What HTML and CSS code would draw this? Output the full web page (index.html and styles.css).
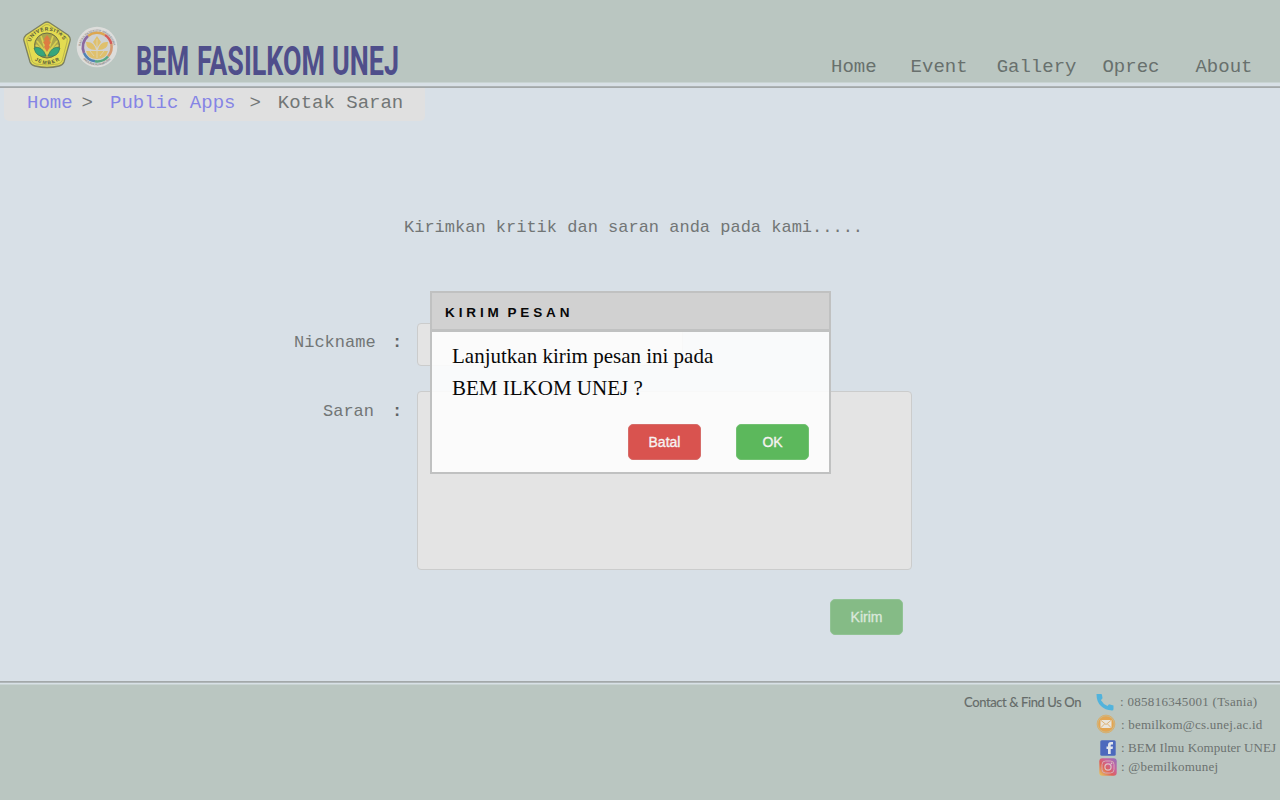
FILE: index.html
```html
<!DOCTYPE html>
<html lang="id">
<head>
<meta charset="utf-8">
<title>BEM FASILKOM UNEJ - Kotak Saran</title>
<link rel="stylesheet" href="styles.css">
</head>
<body>
<div class="page">
  <header class="header">
    <svg class="logo-unej" width="50" height="48" viewBox="0 0 50 48">
      <path d="M22 2Q25 0 28 2L46 14Q49 17 48 20L42 41Q41 44 37 45Q25 48 13 45Q9 44 8 41L2 20Q1 17 4 14Z" fill="#e3dc51" stroke="#7d8062" stroke-width="1.3"/>
      <path d="M23 4Q25 3 27 4L44 16Q46 18 45 21L40 40Q39 42 36 43Q25 45 14 43Q11 42 10 40L5 21Q4 18 6 16Z" fill="none" stroke="#a7a44e" stroke-width=".7"/>
      <circle cx="25" cy="24.500" r="12.500" fill="#aaa64c" stroke="#6d6f45"/>
      <path d="M15 20L25 33L35 20M14 24L25 33L36 24M19 15L25 33L31 15" fill="none" stroke="#d8cf52" stroke-width="1.800"/>
      <path d="M12 27Q20 24 24 35Q14 37 12 27ZM38 27Q30 24 26 35Q36 37 38 27Z" fill="#36a67c" stroke="#3b765b" stroke-width=".7"/>
      <path d="M25 14L28 18L27 20L29 21L27 24L28 26L25 31L22 26L23 24L21 21L23 20L22 18Z" fill="#dd7c42"/>
      <path id="arcTop" d="M8.500 21C13 6 37 6 42 21" fill="none"/>
      <path id="arcBottom" d="M11.500 38.500Q25 48 38.500 38.500" fill="none"/>
      <text class="seal-text"><textPath href="#arcTop" textLength="41">UNIVERSITAS</textPath></text>
      <text class="seal-text"><textPath href="#arcBottom" startOffset="1" textLength="27">JEMBER</textPath></text>
    </svg>
    <svg class="logo-bem" width="42" height="42" viewBox="0 0 42 42">
      <circle cx="21" cy="21" r="20.300" fill="#dddddb"/>
      <circle cx="21" cy="21" r="14" fill="#d0d1d1"/>
      <g fill="none" stroke-width="2.600">
        <path d="M12 10A14.500 14.500 0 0 1 29 9" stroke="#dda650"/>
        <path d="M29 9A14.500 14.500 0 0 1 35.300 18" stroke="#d45b58"/>
        <path d="M35.300 18A14.500 14.500 0 0 1 32 30.500" stroke="#d59a70"/>
        <path d="M32 30.500A14.500 14.500 0 0 1 19 35.300" stroke="#57a783"/>
        <path d="M19 35.300A14.500 14.500 0 0 1 8 27" stroke="#4f82b5"/>
        <path d="M8 27A14.500 14.500 0 0 1 12 10" stroke="#8b69a0"/>
      </g>
      <path d="M21 10L25 16L21 22L17 16ZM10 16Q18 15 20 24Q10 24 10 16ZM32 16Q24 15 22 24Q32 24 32 16ZM10 25L32 25Q30 33 21 33Q12 33 10 25Z" fill="#dfc06d"/>
      <path d="M21 13V32M14 25L18 30M28 25L24 30" stroke="#ddd4b8" fill="none" stroke-width=".8"/>
      <path id="ringTop" d="M4.500 22A16.500 16.500 0 0 1 37.500 22" fill="none"/>
      <path id="ringBottom" d="M7 33A18.500 18.500 0 0 0 35 33" fill="none"/>
      <text class="ring-text"><textPath href="#ringTop" startOffset="2" textLength="47">BADAN EKSEKUTIF MAHASISWA</textPath></text>
      <text class="ring-text"><textPath href="#ringBottom" textLength="31">FAKULTAS ILMU KOMPUTER</textPath></text>
    </svg>
    <svg class="brand" width="270" height="48" viewBox="0 0 270 48">
      <g class="brand-text">
        <text x="0" y="35" textLength="53" lengthAdjust="spacingAndGlyphs">BEM</text>
        <text x="61" y="35" textLength="128" lengthAdjust="spacingAndGlyphs">FASILKOM</text>
        <text x="196" y="35" textLength="67" lengthAdjust="spacingAndGlyphs">UNEJ</text>
      </g>
    </svg>
    <nav class="nav">
      <a class="nav-link nav-home">Home</a>
      <a class="nav-link nav-event">Event</a>
      <a class="nav-link nav-gallery">Gallery</a>
      <a class="nav-link nav-oprec">Oprec</a>
      <a class="nav-link nav-about">About</a>
    </nav>
  </header>
  <main class="main">
    <div class="breadcrumb">
      <a class="crumb">Home</a><span class="sep-first">&gt;</span><a class="crumb">Public Apps</a><span class="sep-second">&gt;</span><span>Kotak Saran</span>
    </div>
    <p class="intro">Kirimkan kritik dan saran anda pada kami.....</p>
    <form class="form">
      <div class="row row-nick"><span class="label">Nickname</span><b class="colon">:</b><div class="field field-nick"></div></div>
      <div class="row row-saran"><span class="label label-saran">Saran</span><b class="colon">:</b><div class="field field-saran"></div></div>
      <div class="btn btn-kirim">Kirim</div>
    </form>
  </main>
  <footer class="footer">
    <div class="contact-title">Contact &amp; Find Us On</div>
    <div class="contacts">
      <div class="contact contact-phone">
        <svg class="icon" width="18" height="18" viewBox="0 0 18 18"><path d="M.5 1H5Q6 1 6 2L6.500 5Q6.500 6 4.800 7Q7 11 11.500 13L13 11.200L17.500 12.500V16Q17.500 17.500 16 17.500Q9 17 5 13Q.5 9 .5 1Z" fill="#52b3dc"/></svg>
        <span class="contact-text t-phone">: 085816345001 (Tsania)</span>
      </div>
      <div class="contact contact-mail">
        <svg class="icon" width="20" height="20" viewBox="0 0 20 20"><circle cx="10" cy="10" r="8.900" fill="#c9bb91" stroke="#dcab61" stroke-width=".8"/><circle cx="10" cy="10" r="7.800" fill="#e3a552"/><rect x="4.500" y="6" width="11" height="8" fill="#e9e5dd"/><path d="M4.500 6L10 10.500L15.500 6M4.500 14L8.500 10M15.500 14L11.500 10" fill="none" stroke="#d9a45c" stroke-width=".8"/></svg>
        <span class="contact-text t-mail">: bemilkom@cs.unej.ac.id</span>
      </div>
      <div class="contact contact-fb">
        <svg class="icon" width="16" height="16" viewBox="0 0 16 16"><rect x=".3" y=".3" width="15.400" height="15.400" rx="1.500" fill="#4d69bd"/><path d="M8 14V9H6.500V6.500H8V5Q8 2 11 2H13V4.500H11.500Q10.700 4.500 10.700 5.300V6.500H13L12.600 9H10.700V14Z" fill="#e3e6ec"/></svg>
        <span class="contact-text t-fb">: BEM Ilmu Komputer UNEJ</span>
      </div>
      <div class="contact contact-ig">
        <svg class="icon" width="18" height="18" viewBox="0 0 18 18"><defs><linearGradient id="ig" x1="0" y1="1" x2="1" y2="0"><stop offset="0" stop-color="#e5cf63"/><stop offset=".38" stop-color="#df6256"/><stop offset=".65" stop-color="#c861a0"/><stop offset="1" stop-color="#9271bb"/></linearGradient></defs><rect x=".3" y=".3" width="17.400" height="17.400" rx="3" fill="url(#ig)"/><rect x="3" y="3" width="12" height="12" rx="3.500" fill="none" stroke="#d8a9b4"/><circle cx="9" cy="9" r="3.100" fill="none" stroke="#ddc3c7" stroke-width="1.200"/><circle cx="12.500" cy="5.400" r=".8" fill="#ddc3c7"/></svg>
        <span class="contact-text t-ig">: @bemilkomunej</span>
      </div>
    </div>
  </footer>
  <div class="modal">
    <div class="modal-head">KIRIM PESAN</div>
    <div class="modal-body">
      <p class="modal-text">Lanjutkan kirim pesan ini pada<br>BEM ILKOM UNEJ ?</p>
      <div class="modal-actions"><div class="btn btn-batal">Batal</div><div class="btn btn-ok">OK</div></div>
    </div>
  </div>
</div>
</body>
</html>
```
FILE: styles.css
```css
* { box-sizing: border-box; }
body { margin: 0; }
p { margin: 0; }
.page {
  position: relative;
  width: 1280px;
  height: 800px;
  display: flex;
  flex-direction: column;
  overflow: hidden;
  background: #d8e0e7;
  font-family: "Liberation Mono", "Courier New", monospace;
  color: #727676;
}
.header {
  height: 88px;
  flex: none;
  display: flex;
  align-items: flex-start;
  padding-left: 22px;
  background: linear-gradient(#bac6c1 82px, #c9d4d3 82px 83px, #d8e0e6 83px 86px, #adb3b5 86px 87px, #a3a8a9 87px);
}
.logo-unej { margin-top: 21px; flex: none; }
.logo-bem { margin: 26px 0 0 4px; flex: none; }
.brand { margin: 40px 0 0 18px; flex: none; overflow: visible; }
.brand-text { font: 700 41px Roboto, sans-serif; fill: #4f4e8b; }
.seal-text { font: 700 5px "Liberation Sans", sans-serif; fill: #56583b; }
.ring-text { font: 700 3px "Liberation Sans", sans-serif; fill: #969293; }
.nav { display: flex; margin: 56px 0 0 425px; font-size: 19px; line-height: 22px; color: #68706d; }
.nav-event { margin-left: 34px; }
.nav-gallery { margin-left: 29px; }
.nav-oprec { margin-left: 26px; }
.nav-about { margin-left: 36px; }
.main { height: 593px; flex: none; }
.breadcrumb {
  width: 421px;
  height: 33px;
  margin-left: 4px;
  padding: 4px 0 0 23px;
  border-radius: 0 0 5px 5px;
  background: #e0e0e0;
  display: flex;
  font-size: 19px;
  line-height: 22px;
}
.crumb { color: #8584e5; }
.sep-first { margin: 0 17px 0 9px; }
.sep-second { margin: 0 17px 0 14px; }
.intro { margin: 97px 0 0 404px; font-size: 17px; line-height: 20px; }
.form { margin-top: 85px; width: 912px; display: flex; flex-direction: column; }
.row { display: flex; font-size: 17px; line-height: 20px; }
.row-nick { padding-left: 294px; height: 43px; }
.row-saran { padding-left: 323px; margin-top: 25px; height: 179px; }
.label { width: 82px; margin-top: 10px; }
.label-saran { width: 53px; margin-top: 11px; }
.colon { width: 41px; padding-left: 16px; margin-top: 10px; color: #606464; }
.row-saran .colon { margin-top: 11px; }
.field { border: 1px solid #cbcccc; border-radius: 4px; background: #e4e4e4; flex: none; }
.field-nick { width: 266px; height: 43px; }
.field-saran { width: 495px; height: 179px; }
.btn {
  width: 73px;
  height: 36px;
  border-radius: 5px;
  display: flex;
  align-items: center;
  justify-content: center;
  font: 14px "Liberation Sans", Arial, sans-serif;
  -webkit-text-stroke: .35px currentColor;
  color: #f6f2f1;
}
.btn-kirim { margin: 29px 9px 0 0; align-self: flex-end; background: #85bb86; border: 1px solid #91c394; color: #dae8db; }
.btn-batal { background: #d9534f; border: 1px solid #d66c69; }
.btn-ok { background: #5cb85c; border: 1px solid #72c172; }
.footer {
  height: 119px;
  flex: none;
  display: flex;
  background: linear-gradient(#a3a8a9 1px, #b0b7b9 1px 2px, #d8e0e6 2px 3px, #c9d4d3 3px 4px, #bac6c1 4px);
}
.contact-title { width: 132px; margin: 12px 0 0 964px; font: 13px/18px Lato, sans-serif; letter-spacing: -.4px; color: #656b69; -webkit-text-stroke: .15px; white-space: nowrap; }
.contacts { padding-top: 11px; }
.contact { display: flex; align-items: center; white-space: nowrap; }
.contact-text { font: 13px/18px "Liberation Serif", serif; color: #6c7270; }
.t-phone { letter-spacing: .3px; }
.t-mail, .t-ig { letter-spacing: .22px; }
.t-fb { letter-spacing: .05px; }
.contact-phone { height: 20px; }
.contact-phone .icon { margin-right: 6px; }
.contact-mail { height: 20px; margin-top: 2px; }
.contact-mail .icon { margin-right: 5px; }
.contact-mail .contact-text { padding-top: 2px; }
.contact-fb { height: 20px; margin: 4px 0 0 4px; }
.contact-fb .icon { margin-right: 5px; }
.contact-ig { height: 18px; margin-left: 3px; }
.contact-ig .icon { margin-right: 4px; }
.modal {
  position: absolute;
  left: 430px;
  top: 291px;
  width: 401px;
  height: 183px;
  border: 2px solid #c0c1c1;
  background: rgba(253, 253, 253, .9);
  color: #080808;
}
.modal-head {
  height: 39px;
  padding: 12px 0 0 13px;
  border-bottom: 3px solid #c0c1c1;
  background: rgba(203, 203, 203, .88);
  font: 700 13.5px/16px "Liberation Sans", Arial, sans-serif;
  letter-spacing: 3.9px;
  word-spacing: -3px;
}
.modal-body { padding: 8px 20px 0; }
.modal-text { font: 21px/32px "Liberation Serif", "Times New Roman", serif; white-space: nowrap; }
.modal-actions { display: flex; justify-content: flex-end; gap: 35px; margin-top: 20px; }
```
